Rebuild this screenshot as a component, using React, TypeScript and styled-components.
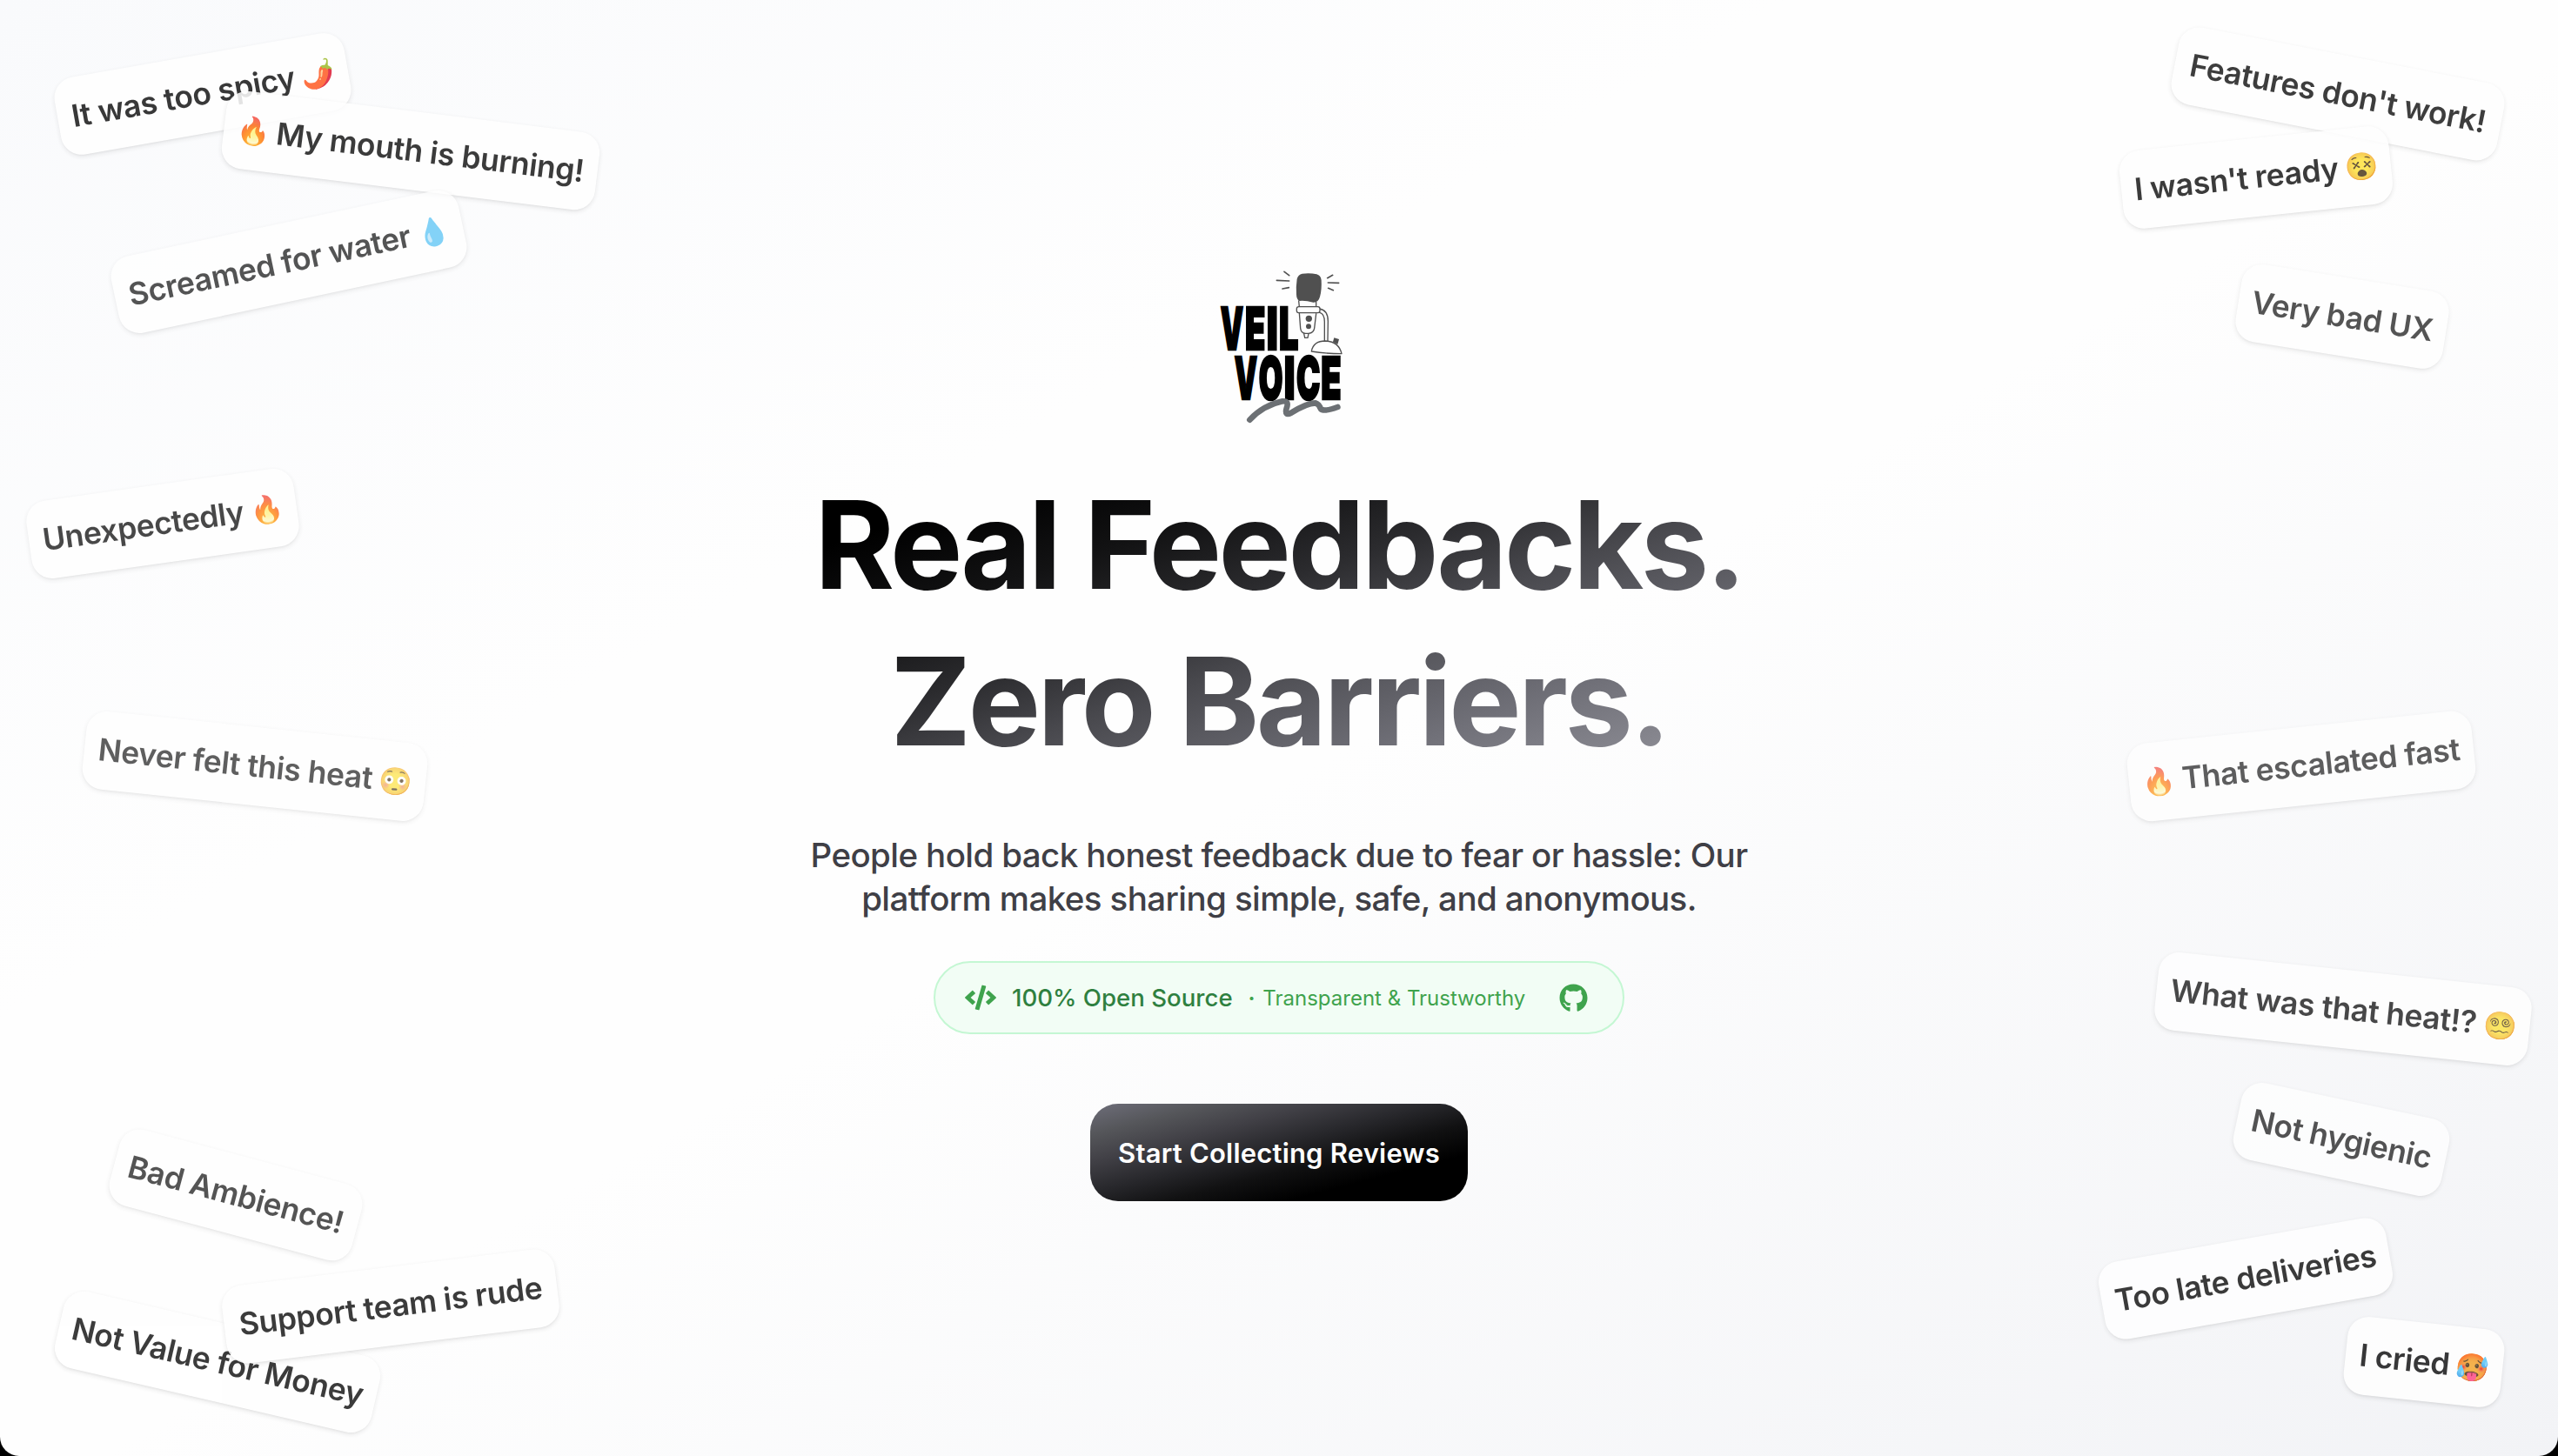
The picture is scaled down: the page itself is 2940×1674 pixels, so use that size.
import React from "react";
import styled, { createGlobalStyle } from "styled-components";
import { FaCode, FaGithub } from "react-icons/fa";

const GlobalStyle = createGlobalStyle`
  * { box-sizing: border-box; }
  html, body { margin: 0; padding: 0; background: #000; }
  body { font-family: Inter, "Liberation Sans", sans-serif; }
`;

const Page = styled.main`
  position: relative;
  width: 100%;
  height: 1674px;
  overflow: hidden;
  border-radius: 0 0 22px 22px;
  background: linear-gradient(to bottom right, #f9fafc 0%, #fefefe 35%, #fefefe 52%, #f2f3f6 100%);
`;

const Hero = styled.section`
  display: flex;
  flex-direction: column;
  align-items: center;
  padding-top: 290px;
`;

const Logo = styled.svg`
  width: 180px;
  height: 210px;
  overflow: visible;
`;

const Title = styled.h1`
  margin: 36px 0 0;
  width: 1094px;
  text-align: center;
  font-size: 140px;
  line-height: 180px;
  font-weight: 700;
  letter-spacing: -3.5px;
  white-space: nowrap;
  color: transparent;
  background: linear-gradient(
    to bottom right,
    #000 14%,
    #121213 29%,
    #2b2b2e 43%,
    #48484d 55%,
    #56565c 62%,
    #707078 76%,
    #898991 90%,
    #94949d 100%
  );
  -webkit-background-clip: text;
  background-clip: text;
`;

const Lead = styled.p`
  margin: 62px 0 0;
  text-align: center;
  font-size: 38.5px;
  line-height: 50px;
  font-weight: 500;
  letter-spacing: -0.6px;
  color: #3f3f46;
  white-space: nowrap;
`;

const Pill = styled.a`
  display: flex;
  align-items: center;
  width: 794px;
  height: 84px;
  margin-top: 47px;
  padding: 0 40px 0 34px;
  border: 2px solid #c4f7d3;
  border-radius: 42px;
  background: #f2fdf5;
  color: #3fa34d;
  white-space: nowrap;
`;

const PillLabel = styled.span`
  margin-left: 18px;
  font-size: 27.6px;
  font-weight: 500;
  color: #2f8040;
`;

const PillNote = styled.span`
  margin-left: 18px;
  font-size: 24px;
`;

const Dot = styled.span`
  margin-right: 2px;
  font-weight: 700;
`;

const GithubMark = styled(FaGithub)`
  margin-left: auto;
`;

const Cta = styled.button`
  width: 434px;
  height: 112px;
  margin-top: 80px;
  padding: 0;
  border: 0;
  border-radius: 32px;
  font: 600 31px/1 Inter, sans-serif;
  letter-spacing: 0.2px;
  color: #fff;
  white-space: nowrap;
  background: linear-gradient(
    to bottom right,
    #6b6b76 2%,
    #55565a 16%,
    #414046 30%,
    #27272b 46%,
    #111112 60%,
    #000 76%
  );
`;

interface NoteProps {
  $x: number;
  $y: number;
  $w: number;
  $angle: number;
  $opacity: number;
}

/* Paper notes scattered freely over the canvas, anchored at their centre. */
const Note = styled.div<NoteProps>`
  position: absolute;
  left: ${(p) => p.$x}px;
  top: ${(p) => p.$y}px;
  width: ${(p) => p.$w}px;
  height: 90px;
  display: flex;
  align-items: center;
  justify-content: center;
  transform: translate(-50%, -50%) rotate(${(p) => p.$angle}deg);
  border-radius: 24px;
  background: #fff;
  box-shadow: 0 2px 6px rgba(0, 0, 0, 0.1), 0 2px 4px -2px rgba(0, 0, 0, 0.1);
  opacity: ${(p) => p.$opacity};
  font-size: 35.5px;
  line-height: 56px;
  font-weight: 600;
  letter-spacing: -0.4px;
  color: #1c1c1c;
  white-space: pre;
`;

const Emoji = styled.span`
  display: inline-block;
  margin: 0 -1px;
  font-size: 31px;
  line-height: 1;
  vertical-align: 1px;
  opacity: 0.92;
`;

type NoteData = {
  before?: string;
  text: string;
  after?: string;
  x: number;
  y: number;
  w: number;
  angle: number;
  opacity: number;
};

const notes: NoteData[] = [
  { text: "It was too spicy", after: "🌶️", x: 232.5, y: 108, w: 338, angle: -10, opacity: 0.87 },
  { before: "🔥", text: "My mouth is burning!", x: 471.8, y: 173, w: 432, angle: 7, opacity: 0.86 },
  { text: "Screamed for water", after: "💧", x: 331.5, y: 300.5, w: 408, angle: -12, opacity: 0.75 },
  { text: "Features don't work!", x: 2686.9, y: 108, w: 381, angle: 11, opacity: 0.85 },
  { text: "I wasn't ready", after: "😵", x: 2592.5, y: 203.8, w: 311, angle: -6, opacity: 0.86 },
  { text: "Very bad UX", x: 2691.5, y: 364, w: 241, angle: 9, opacity: 0.75 },
  { text: "Unexpectedly", after: "🔥", x: 186.7, y: 602, w: 310, angle: -8, opacity: 0.8 },
  { text: "Never felt this heat", after: "😳", x: 293.3, y: 881, w: 394, angle: 6, opacity: 0.7 },
  { text: "Bad Ambience!", x: 271, y: 1373.8, w: 288, angle: 15, opacity: 0.75 },
  { text: "Not Value for Money", x: 250, y: 1566, w: 373, angle: 13, opacity: 0.86 },
  { text: "Support team is rude", x: 448.6, y: 1501.8, w: 385, angle: -7, opacity: 0.86 },
  { before: "🔥", text: "That escalated fast", x: 2645.2, y: 881.3, w: 398, angle: -6, opacity: 0.7 },
  { text: "What was that heat!?", after: "😵‍💫", x: 2692.7, y: 1160, w: 431, angle: 6, opacity: 0.8 },
  { text: "Not hygienic", x: 2690.9, y: 1310.2, w: 244, angle: 12, opacity: 0.75 },
  { text: "Too late deliveries", x: 2581, y: 1470, w: 335, angle: -10, opacity: 0.86 },
  { text: "I cried", after: "🥵", x: 2785.9, y: 1566, w: 181, angle: 6, opacity: 0.87 },
];

type Glyph = [string, number, number];

const veil: Glyph[] = [["V", 68, 79], ["E", 153, 70], ["I", 227, 39], ["L", 270, 67]];
const voice: Glyph[] = [["V", 116, 79], ["O", 200, 83], ["I", 287, 38], ["C", 330, 82], ["E", 415, 70]];

const Word = ({ glyphs, y }: { glyphs: Glyph[]; y: number }) => (
  <text y={y}>
    {glyphs.map(([ch, x, w]) => (
      <tspan key={ch} x={x} textLength={w} lengthAdjust="spacingAndGlyphs">
        {ch}
      </tspan>
    ))}
  </text>
);

const LogoMark = () => (
  <Logo viewBox="0 0 540 630" role="img" aria-label="Veil Voice">
    <g fontFamily="Inter, sans-serif" fontWeight={900} fontSize={202} stroke="#000" strokeWidth={8}>
      <Word glyphs={veil} y={336} />
      <Word glyphs={voice} y={506} />
    </g>
    <g fill="none" stroke="#505050" strokeWidth="5" strokeLinecap="round" strokeLinejoin="round">
      <path d="M288 67 L305 80 M262 97 L305 99 M282 126 L304 122 M455 79 L437 89 M439 105 L476 106 M440 124 L457 131" />
      <path d="M338 168 L340 188 M398 172 L398 188" strokeWidth="4" />
      <path d="M340 209 L344 262 Q346 280 362 280 H372 Q390 278 392 262 L398 212" strokeWidth="4" fill="#fff" />
      <path d="M356 281 L359 295 H369 L372 281" strokeWidth="4" />
      <path d="M410 195 Q440 200 439 240 L438 305 M410 208 Q427 212 427 240 L427 305" strokeWidth="4" />
      <rect x="331" y="188" width="80" height="21" rx="7" fill="#fff" strokeWidth="4" />
      <path d="M382 342 Q388 306 430 306 Q476 308 486 350 Q430 350 382 342 Z" fill="#fff" strokeWidth="4" />
    </g>
    <path
      d="M350 74 Q376 70 400 76 Q414 80 416 96 Q418 130 411 154 Q406 174 388 173 Q362 166 340 168 Q330 162 330 145 Q328 120 332 92 Q336 77 350 74Z"
      fill="#505050"
    />
    <circle cx="373" cy="229" r="11" fill="#505050" />
    <circle cx="372" cy="256" r="9" fill="#505050" />
    <path d="M460 295 L477 300 L472 318 L456 309 Z" fill="#505050" />
    <path
      d="M169 578 Q216 528 282 514 Q306 512 296 538 Q288 566 312 554 Q366 520 396 520 Q408 524 414 540 Q424 552 472 534"
      fill="none"
      stroke="#6c7074"
      strokeWidth="20"
      strokeLinecap="round"
      strokeLinejoin="round"
    />
  </Logo>
);

export default function App() {
  return (
    <>
      <GlobalStyle />
      <Page>
        <Hero>
          <LogoMark />
          <Title>
            Real Feedbacks.
            <br />
            Zero Barriers.
          </Title>
          <Lead>
            People hold back honest feedback due to fear or hassle: Our
            <br />
            platform makes sharing simple, safe, and anonymous.
          </Lead>
          <Pill>
            <FaCode size={36} />
            <PillLabel>100% Open Source</PillLabel>
            <PillNote>
              <Dot>·</Dot> Transparent &amp; Trustworthy
            </PillNote>
            <GithubMark size={33} />
          </Pill>
          <Cta>Start Collecting Reviews</Cta>
        </Hero>
        {notes.map((n) => (
          <Note key={n.text} $x={n.x} $y={n.y} $w={n.w} $angle={n.angle} $opacity={n.opacity}>
            <span>
              {n.before && <Emoji>{n.before}</Emoji>}
              {n.before && " "}
              {n.text}
              {n.after && " "}
              {n.after && <Emoji>{n.after}</Emoji>}
            </span>
          </Note>
        ))}
      </Page>
    </>
  );
}
